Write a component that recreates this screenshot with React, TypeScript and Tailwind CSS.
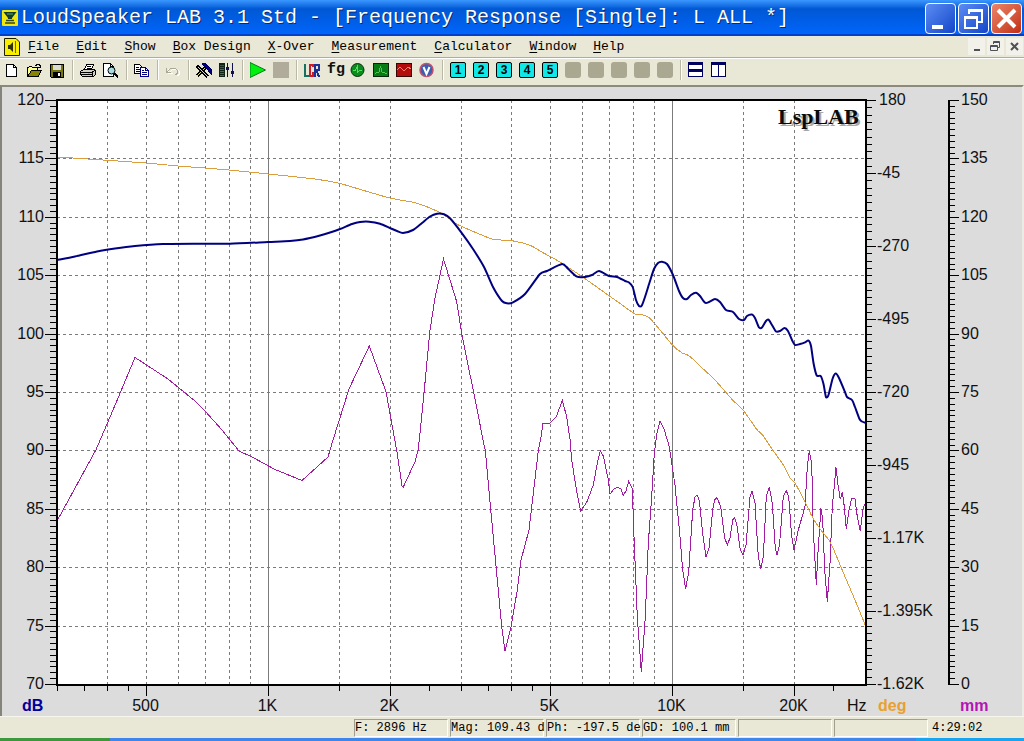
import type { ReactNode } from "react";

type Point = [number, number];

const MONO = "font-['Liberation_Mono',monospace]";

/* ---------- chart geometry ---------- */

const LEFT = 57;
const RIGHT = 866;
const TOP = 100;
const BOTTOM = 684;
const GD_AXIS = 949;

const freqX = (hz: number) => Math.round(268 + 404 * Math.log10(hz / 1000)) + 0.5;
const rowY = (index: number, count: number) =>
  Math.round(TOP + ((BOTTOM - TOP) * index) / count) + 0.5;

const dashedFreqs = [400, 500, 600, 700, 800, 900, 1500, 2000, 3000, 4000, 5000, 6000, 7000, 8000, 9000, 15000, 20000];
const solidFreqs = [1000, 10000];
const minorFreqs = [300, 350, 400, 450, 1500, 2500, 3000, 3500, 4000, 4500, 15000, 25000];
const majorFreqs: { hz: number; label: string }[] = [
  { hz: 500, label: "500" },
  { hz: 1000, label: "1K" },
  { hz: 2000, label: "2K" },
  { hz: 5000, label: "5K" },
  { hz: 10000, label: "10K" },
  { hz: 20000, label: "20K" },
];

const dbLabels = ["120", "115", "110", "105", "100", "95", "90", "85", "80", "75", "70"];
const degLabels = ["180", "-45", "-270", "-495", "-720", "-945", "-1.17K", "-1.395K", "-1.62K"];
const mmLabels = ["150", "135", "120", "105", "90", "75", "60", "45", "30", "15", "0"];

const magnitude: Point[] = [
  [57, 260], [75, 256.5], [97, 251.5], [115, 248.5], [135, 246], [163, 244], [200, 243.7], [230, 243.7],
  [268, 242], [290, 241], [303, 239.5], [320, 235.5], [330, 232.5], [340, 229], [352, 224], [360, 222],
  [369, 221.7], [380, 223.7], [390, 228], [397, 231], [403, 233], [413, 230], [422, 223], [430, 216.5],
  [437, 213.7], [444, 214.3], [450, 218.3], [462, 233.3], [473, 249], [484, 267], [493, 287], [502, 301],
  [507, 303.3], [513, 302.3], [525, 294], [540, 274], [547, 271], [562, 264], [568, 268.7], [577, 276.7],
  [585, 277], [592, 275], [599, 271], [609, 276], [617, 277], [625, 281], [629, 282.5], [632.7, 287],
  [636, 300], [639, 306], [641.7, 305.7], [645, 297], [650, 281], [654, 269], [658, 263], [662, 261.7],
  [667, 264], [673, 275], [679, 291], [683, 298], [687, 299], [691, 295], [696, 292.7], [700, 296],
  [705, 302.7], [709, 302], [715, 299], [720, 302], [726, 310], [733, 312], [739, 319], [744, 320],
  [747, 316], [752, 314.5], [755, 318], [759, 327.5], [762, 327.5], [766, 321], [768.5, 319.7], [772, 325],
  [776, 331.5], [780, 331], [784.5, 328], [788, 331], [792, 340], [795, 345], [800, 344], [805, 342.3],
  [808.5, 340.5], [811, 346], [813.5, 363], [816.7, 375.5], [820.7, 376], [823.5, 384], [826, 397], [828.5, 395],
  [832.5, 379], [835.7, 373.5], [839, 378], [845, 392], [847, 397], [852, 400], [855, 407], [859.5, 419],
  [862, 421.5], [866, 423],
];

const phase: Point[] = [
  [57, 157], [80, 158.5], [103, 160], [146, 163], [178, 166], [205, 168], [229, 170], [249, 172],
  [268, 174], [315, 179], [340, 183.5], [362, 190], [390, 198], [415, 202.7], [430, 208], [443, 214.3],
  [458, 224.7], [477, 233], [493, 239.3], [512, 240.7], [530, 245.3], [543, 252.7], [560, 262], [583, 277.3],
  [600, 289.3], [617, 301.3], [635, 314], [641.7, 314.7], [649, 317.7], [656.7, 326], [672.7, 345.3],
  [681.7, 352.7], [689.3, 356], [703.3, 369], [715, 380], [731.7, 399], [744, 411.3], [756.7, 429.3],
  [763, 435.5], [773, 450.5], [783, 464.5], [790, 477.7], [795, 483.3], [803, 497.7], [813, 518.3],
  [821.7, 531], [830, 541.7], [836.7, 556.7], [845, 576.7], [855, 600], [865, 624.5],
];

const groupDelay: Point[] = [
  [57, 521], [96, 449.7], [107, 424], [113, 410], [135, 357.5], [168, 379], [195, 401], [205, 411],
  [222, 430], [239, 451], [253, 457.5], [275, 469.5], [302, 480.5], [328, 457], [333, 440], [349, 389],
  [369.3, 346], [386, 391.7], [393, 430], [397, 452], [402, 486], [403.3, 487], [415, 461.7], [418, 450.7],
  [419.5, 438], [424.3, 390], [430, 330], [435, 298], [443.5, 259], [456.7, 301.7], [461.7, 333.3],
  [468.3, 366.7], [473.3, 390], [482.7, 438.3], [485.3, 450.7], [490.7, 509.3], [496.7, 573.3],
  [501.7, 626.7], [505, 651], [511, 626.7], [517.3, 590], [521, 560], [529, 530], [533.3, 493.3],
  [538.3, 450.7], [540.7, 439], [543, 423.5], [550, 423], [556, 417.3], [562.3, 400.5], [566.7, 416.7],
  [570, 439.3], [571.7, 460], [576.7, 491.7], [580.7, 511], [586.7, 502.3], [593.3, 485], [597.3, 463.3],
  [600.3, 450.5], [603.3, 456], [608, 478.3], [610, 494], [614, 489], [617, 487.7], [620.7, 488.3],
  [623.3, 495.3], [626, 491], [628.7, 481], [632.3, 488.3], [634, 536.7], [637.3, 616.7], [641.3, 672],
  [645.3, 616.7], [648.3, 543.3], [651.7, 496.7], [654.3, 453.3], [657, 433], [660, 421], [664.3, 430],
  [669.3, 446.7], [672.5, 468.5], [675, 485], [680, 536.7], [682.7, 570], [685.7, 589], [688.7, 571.7],
  [692.7, 510], [695, 497], [697.3, 495.3], [699.3, 500.7], [702.7, 533.3], [706, 557], [709, 548.3],
  [712.7, 510], [714.7, 500], [717, 497.7], [720.7, 506.7], [724.7, 538.3], [727.3, 544.7], [730, 538],
  [732.7, 520], [734.3, 517.7], [736.7, 523.3], [740, 548.3], [743, 555.3], [746, 545], [750, 496.7],
  [752, 491], [755, 503.3], [758.3, 556.7], [760.7, 569], [763.3, 556.7], [766.3, 496.7], [769.3, 487],
  [772.3, 503.3], [775.3, 548.3], [777, 555.3], [779.5, 545], [783.3, 496.7], [786.3, 490.7],
  [788.7, 496.7], [791.7, 536.7], [794, 550], [798.3, 530], [805, 506.7], [807.3, 466.7], [809.3, 451],
  [811.7, 463.3], [813.3, 530], [816.3, 584.5], [818.3, 546.7], [821, 508.5], [822.7, 520], [824.7, 570],
  [827.3, 601.5], [830, 563.3], [832.3, 506.7], [836, 467.5], [838, 485], [840.3, 499.3], [842.3, 492],
  [844.3, 506.7], [846.3, 529], [849, 510], [851.7, 498.3], [855, 499], [857.3, 516.7], [860.3, 531],
  [863.3, 507], [865, 504],
];

const straightPath = (points: Point[]) => "M" + points.map(([x, y]) => `${x} ${y}`).join("L");

function smoothPath(points: Point[]) {
  let d = `M${points[0][0]} ${points[0][1]}`;
  for (let i = 0; i < points.length - 1; i++) {
    const p0 = points[Math.max(i - 1, 0)];
    const p1 = points[i];
    const p2 = points[i + 1];
    const p3 = points[Math.min(i + 2, points.length - 1)];
    const c1 = [p1[0] + (p2[0] - p0[0]) / 8, p1[1] + (p2[1] - p0[1]) / 8];
    const c2 = [p2[0] - (p3[0] - p1[0]) / 8, p2[1] - (p3[1] - p1[1]) / 8];
    d += `C${c1[0]} ${c1[1]} ${c2[0]} ${c2[1]} ${p2[0]} ${p2[1]}`;
  }
  return d;
}

/** Ruler marks growing sideways from a vertical axis. */
function rulerPath(x: number, majors: number, long: number, short: number) {
  const steps = majors * 10;
  let d = "";
  for (let i = 0; i <= steps; i++) {
    d += `M${x} ${rowY(i, steps)}h${i % 10 === 0 ? long : short}`;
  }
  return d;
}

function Chart() {
  return (
    <svg
      viewBox="2 87 1020 629"
      role="img"
      aria-label="Frequency response chart"
      className="block h-auto w-full font-['Liberation_Sans',Arial,sans-serif] text-[16px]"
    >
      <rect x={LEFT} y={TOP} width={RIGHT - LEFT} height={BOTTOM - TOP} fill="#fff" />

      <g stroke="#7b7b7b" strokeWidth="1" fill="none" shapeRendering="crispEdges">
        {dashedFreqs.map((hz) => (
          <path key={hz} d={`M${freqX(hz)} ${TOP}V${BOTTOM}`} strokeDasharray="3 3" />
        ))}
        {solidFreqs.map((hz) => (
          <path key={hz} d={`M${freqX(hz)} ${TOP}V${BOTTOM}`} />
        ))}
        {dbLabels.slice(1, -1).map((label, i) => (
          <path key={label} d={`M${LEFT} ${rowY(i + 1, 10)}H${RIGHT}`} strokeDasharray="3 3" />
        ))}
      </g>

      <g fill="none" shapeRendering="crispEdges">
        <path d={straightPath(groupDelay)} stroke="#a01ca0" strokeWidth="1" />
        <path d={smoothPath(phase)} stroke="#dc9e3c" strokeWidth="1" />
      </g>
      <path d={smoothPath(magnitude)} stroke="#000080" strokeWidth="2" fill="none" />

      <g stroke="#000" fill="none" shapeRendering="crispEdges">
        <rect x={LEFT} y={TOP} width={RIGHT - LEFT} height={BOTTOM - TOP + 1} strokeWidth="2" transform="translate(-.5 0)" />
        <path d={`M${GD_AXIS} ${TOP}V${BOTTOM + 1}`} strokeWidth="2" />
        <path d={rulerPath(LEFT, 10, -12, -7)} />
        <path d={rulerPath(RIGHT, 8, 10, 6)} />
        <path d={rulerPath(GD_AXIS, 10, 10, 6)} />
        {minorFreqs.map((hz) => (
          <path key={hz} d={`M${freqX(hz)} ${BOTTOM}v7`} />
        ))}
        {majorFreqs.map(({ hz }) => (
          <path key={hz} d={`M${freqX(hz)} ${BOTTOM}v12`} />
        ))}
      </g>

      <g fill="#111">
        {dbLabels.map((label, i) => (
          <text key={label} x="44" y={rowY(i, 10) + 4.5} textAnchor="end">{label}</text>
        ))}
        {degLabels.map((label, i) => (
          <text key={label} x={label.startsWith("-") ? 877 : 879} y={rowY(i, 8) + 4.5}>{label}</text>
        ))}
        {mmLabels.map((label, i) => (
          <text key={label} x="961" y={rowY(i, 10) + 4.5}>{label}</text>
        ))}
        {majorFreqs.map(({ hz, label }) => (
          <text key={hz} x={freqX(hz) - 1} y="711" textAnchor="middle">{label}</text>
        ))}
        <text x="847" y="711">Hz</text>
      </g>
      <g fontWeight="bold">
        <text x="22" y="711" fill="#00009a">dB</text>
        <text x="878" y="711" fill="#e8a030">deg</text>
        <text x="960" y="711" fill="#b414b4">mm</text>
      </g>
      <g fontSize="22" fontWeight="bold" className="font-['Liberation_Serif',serif]">
        <text x="780" y="126" fill="#a8a8a8">LspLAB</text>
        <text x="778" y="124" fill="#0a0a0a">LspLAB</text>
      </g>
    </svg>
  );
}

/* ---------- toolbar icons ---------- */

function Icon({ children }: { children: ReactNode }) {
  return (
    <svg width="16" height="16" viewBox="0 0 16 16" fill="none" aria-hidden="true" shapeRendering="crispEdges">
      {children}
    </svg>
  );
}

const NumberIcon = ({ n }: { n: number }) => (
  <span className="flex size-4 items-center justify-center rounded-[2px] border border-black bg-[#10e8e8] font-['Liberation_Sans',Arial,sans-serif] text-[12px] leading-none font-bold text-black">
    {n}
  </span>
);

const EmptyIcon = () => <span className="block size-4 rounded-[3px] bg-[#aaa890]" />;

type Tool = { name: string; icon: ReactNode };

const toolGroups: Tool[][] = [
  [
    {
      name: "New",
      icon: (
        <Icon>
          <path d="M3.5 2.5H10.5L13.5 5.5V14.5H3.5Z" fill="#fff" stroke="#000" />
          <path d="M10.5 2.5V5.5H13.5" stroke="#000" />
        </Icon>
      ),
    },
    {
      name: "Open",
      icon: (
        <Icon>
          <path d="M1.5 14V5.5H2.5L3.5 4.5H5.5L6.5 5.5H11.5V8" fill="#ffff90" stroke="#000" />
          <path d="M1.5 14.5L5.5 8.5H15.5L12 14.5Z" fill="#858500" stroke="#000" />
          <path d="M9 3.5H10V2.5H13V3.5H14V5M12 5.5H15M14.5 3V6" stroke="#000" />
        </Icon>
      ),
    },
    {
      name: "Save",
      icon: (
        <Icon>
          <path d="M1.5 2.5H14.5V15.5H2.5L1.5 14.5Z" fill="#77770e" stroke="#000" />
          <path d="M4 3H12V8H4Z" fill="#dcdcd4" />
          <path d="M4 10H12V15H4Z" fill="#000" />
          <path d="M9 11H11V14H9Z" fill="#fff" />
        </Icon>
      ),
    },
  ],
  [
    {
      name: "Print",
      icon: (
        <Icon>
          <path d="M4.5 7.5L6.5 2.5H13.5L11.5 7.5Z" fill="#fff" stroke="#000" />
          <path d="M7 4.5H11M6.5 6H10.5" stroke="#000" />
          <path d="M.5 9.5L3.5 7.5H14.5L15.5 8.5V12.5L13.5 14.5H2.5L.5 12.5Z" fill="#d0d0c8" stroke="#000" />
          <path d="M1 10.5H12.5M1 12.5H12.5M12.5 10V14M12.5 10L15 8" stroke="#000" />
          <path d="M8 11.5H10" stroke="#d8c800" />
        </Icon>
      ),
    },
    {
      name: "Print preview",
      icon: (
        <Icon>
          <path d="M.5 1.5H7.5L10.5 4.5V14.5H.5Z" fill="#fff" stroke="#000" />
          <path d="M7.5 1.5V4.5H10.5" stroke="#000" />
          <circle cx="8.5" cy="8.5" r="3.5" fill="#a8dce0" stroke="#000" shapeRendering="auto" />
          <path d="M11 11.5L15 15" stroke="#000" strokeWidth="2" />
        </Icon>
      ),
    },
  ],
  [
    {
      name: "Copy",
      icon: (
        <Icon>
          <path d="M.5 2.5H5.5L8.5 5.5V11.5H.5Z" fill="#fff" stroke="#000" />
          <path d="M2 5.5H5M2 7.5H6M2 9.5H6" stroke="#000" />
          <path d="M6.5 5.5H11.5L14.5 8.5V14.5H6.5Z" fill="#fff" stroke="#000080" />
          <path d="M11.5 5.5V8.5H14.5M8 8.5H10M8 10.5H13M8 12.5H13" stroke="#000080" />
        </Icon>
      ),
    },
  ],
  [
    {
      name: "Undo",
      icon: (
        <Icon>
          <path d="M2.5 6V10.5H7M3 10L6.5 6.5H10.5L13.5 8.5V11L11.5 13" stroke="#fff" transform="translate(1 1)" />
          <path d="M1.5 6V10.5H6M2 10L5.5 6.5H10.5L12.5 8.5V11L10.5 13" stroke="#aaa896" />
        </Icon>
      ),
    },
  ],
  [
    {
      name: "Tools",
      icon: (
        <Icon>
          <path d="M1 14L9 6" stroke="#000" strokeWidth="3" />
          <path d="M1 14L9 6" stroke="#e8e060" />
          <path d="M6 2L9 1L15 7V12L11 7Z" fill="#000080" stroke="#000060" />
          <path d="M1 4L12 15" stroke="#000" strokeWidth="3" />
          <path d="M2 5L12 15" stroke="#d8d8d0" />
        </Icon>
      ),
    },
    {
      name: "Levels",
      icon: (
        <Icon>
          <path d="M0 1H6V15H0Z" fill="#102418" />
          <path d="M1 3.5H5M1 5.5H5" stroke="#b02424" />
          <path d="M1 7.5H5M1 9.5H5M1 11.5H5M1 13.5H5" stroke="#1c8840" />
          <path d="M8.5 1V15M13.5 1V15" stroke="#101050" />
          <path d="M7 5H10V8H7ZM12 9H15V12H12Z" fill="#101050" />
        </Icon>
      ),
    },
  ],
  [
    {
      name: "Run",
      icon: (
        <Icon>
          <path d="M0 .5L15.5 8L0 15.5Z" fill="#00f010" stroke="#087818" shapeRendering="auto" />
        </Icon>
      ),
    },
    { name: "Stop", icon: <span className="block size-4 bg-[#b0ab9b]" /> },
  ],
  [
    {
      name: "LCR",
      icon: (
        <Icon>
          <path d="M1 2V14H4.500" stroke="#187060" strokeWidth="2" />
          <path d="M9 5V2.500H6V13.500H9V10" stroke="#c81c28" strokeWidth="2" />
          <path d="M11 15V2.500H14.500V7.500H12" stroke="#1c3094" strokeWidth="2" />
          <path d="M12.500 8L15 15" stroke="#1c3094" strokeWidth="2" />
        </Icon>
      ),
    },
    {
      name: "Function generator",
      icon: <span className={`${MONO} text-[15px] leading-4 font-bold text-[#101010]`}>fg</span>,
    },
    {
      name: "Sine sweep",
      icon: (
        <Icon>
          <circle cx="7.5" cy="8" r="6.5" fill="#0c8c1c" stroke="#06300c" shapeRendering="auto" />
          <path d="M3 8.5H5L7 5V11L9.5 8.5H12" stroke="#50e060" />
        </Icon>
      ),
    },
    {
      name: "Spectrum",
      icon: (
        <Icon>
          <path d="M.5 1.5H15.5V14.5H.5Z" fill="#067c14" stroke="#04280a" />
          <path d="M2 11.5L6 10L7.5 4L9 10L14 11.5" stroke="#50c850" />
        </Icon>
      ),
    },
    {
      name: "Oscilloscope",
      icon: (
        <Icon>
          <path d="M.5 1.5H15.5V14.5H.5Z" fill="#b40c0c" stroke="#380404" />
          <path d="M1 8L4 5L7 8H9L12 5L15 7" stroke="#f08070" />
        </Icon>
      ),
    },
    {
      name: "Voltmeter",
      icon: (
        <svg width="16" height="16" viewBox="0 0 16 16" fill="none" aria-hidden="true">
          <circle cx="7.5" cy="8" r="6.5" fill="#3860b0" stroke="#c05070" strokeWidth="1.5" />
          <path d="M4.5 5L7.5 12L10.5 5" stroke="#fff" strokeWidth="2" />
        </svg>
      ),
    },
  ],
  [
    ...[1, 2, 3, 4, 5].map((n) => ({ name: `Curve ${n}`, icon: <NumberIcon n={n} /> })),
    ...[6, 7, 8, 9, 10].map((n) => ({ name: `Curve ${n}`, icon: <EmptyIcon /> })),
  ],
  [
    {
      name: "Tile horizontally",
      icon: (
        <Icon>
          <path d="M.5 .5H14.5V7.5H.5ZM.5 8.5H14.5V14.5H.5Z" fill="#fff" stroke="#000060" />
          <path d="M0 0H15V3H0ZM0 7H15V10H0Z" fill="#000060" />
        </Icon>
      ),
    },
    {
      name: "Tile vertically",
      icon: (
        <Icon>
          <path d="M.5 .5H7.5V14.5H.5ZM7.5 .5H14.5V14.5H7.5Z" fill="#fff" stroke="#000060" />
          <path d="M0 0H15V3H0Z" fill="#000060" />
        </Icon>
      ),
    },
  ],
];

function Toolbar() {
  return (
    <div role="toolbar" className="flex h-[27px] items-start border-t border-white pt-px">
      {toolGroups.map((group, index) => (
        <div key={group[0].name} className="flex items-center">
          {index > 0 && (
            <span className="flex w-2 justify-center">
              <span className="h-5 w-0.5 border-r border-l border-r-white border-l-[#bab8a6]" />
            </span>
          )}
          {group.map((tool) => (
            <button key={tool.name} type="button" aria-label={tool.name} className="flex h-5 w-[23px] items-center pl-[3px]">
              {tool.icon}
            </button>
          ))}
        </div>
      ))}
    </div>
  );
}

/* ---------- window chrome ---------- */

const menus = ["File", "Edit", "Show", "Box Design", "X-Over", "Measurement", "Calculator", "Window", "Help"];

function TitleBar() {
  return (
    <header className="flex h-9 items-center gap-0.5 bg-linear-to-b from-[#3a98ff] via-[#0058d4] via-25% to-[#0066ff] px-0.5 shadow-[inset_0_-2px_0_#0040c8]">
      <svg width="16" height="16" viewBox="0 0 16 16" aria-hidden="true" className="shrink-0">
        <rect width="16" height="16" rx="1" fill="#f0e80c" />
        <path d="M1.500 2H14.500L10 8V9H6V8Z" fill="#143c30" />
        <path d="M5 4H11" stroke="#58b058" />
        <path d="M4 10.500H12M3 13H13" stroke="#30481c" strokeWidth="1.500" />
      </svg>
      <h1 className={`${MONO} min-w-0 flex-1 truncate pl-px text-[20px] leading-9 text-white [text-shadow:1px_1px_0_#0a2a70]`}>
        LoudSpeaker LAB 3.1 Std - [Frequency Response [Single]: L ALL *]
      </h1>
      <button type="button" aria-label="Minimize" className="size-[31px] rounded-[4px] border border-white bg-linear-to-br from-[#5c8cf4] to-[#1444c8]">
        <svg width="29" height="29" viewBox="0 0 29 29" aria-hidden="true">
          <path d="M6 21H17V25H6Z" fill="#fff" />
        </svg>
      </button>
      <button type="button" aria-label="Restore" className="size-[31px] rounded-[4px] border border-white bg-linear-to-br from-[#5c8cf4] to-[#1444c8]">
        <svg width="29" height="29" viewBox="0 0 29 29" fill="none" stroke="#fff" aria-hidden="true">
          <path d="M10 10V6H23V18H19" strokeWidth="2" />
          <path d="M9 6.500H24" strokeWidth="3" />
          <path d="M6 14H18V24H6Z" strokeWidth="2" />
          <path d="M5 13.500H19" strokeWidth="3" />
        </svg>
      </button>
      <button type="button" aria-label="Close" className="size-[31px] rounded-[4px] border border-white bg-linear-to-br from-[#ec8468] to-[#c02c10]">
        <svg width="29" height="29" viewBox="0 0 29 29" stroke="#fff" strokeWidth="4" aria-hidden="true">
          <path d="M6 6L23 23M23 6L6 23" />
        </svg>
      </button>
    </header>
  );
}

function MenuBar() {
  return (
    <nav className="flex h-[22px] items-center border-b border-[#aeac9c] pr-px pl-1">
      <svg width="16" height="18" viewBox="0 0 16 18" aria-hidden="true" className="shrink-0">
        <path d="M.5 .5H12L15.500 4V17.500H.5Z" fill="#f8f000" stroke="#202000" />
        <path d="M4 7H6L9 4V14L6 11H4Z" fill="#303010" />
        <path d="M11.500 3V15" stroke="#806000" />
      </svg>
      <ul className={`${MONO} flex flex-1 gap-px pt-px text-[13px] leading-5 text-black`}>
        {menus.map((menu) => (
          <li key={menu}>
            <button type="button" className="px-2 whitespace-pre">
              <span className="underline underline-offset-2">{menu[0]}</span>
              {menu.slice(1)}
            </button>
          </li>
        ))}
      </ul>
      <div className="flex gap-0.5">
        <button type="button" aria-label="Minimize chart" className="size-[17px] bg-[#f3f2ea]">
          <svg width="17" height="17" viewBox="0 0 17 17" aria-hidden="true">
            <path d="M6 11H12V13H6Z" fill="#505058" />
          </svg>
        </button>
        <button type="button" aria-label="Restore chart" className="size-[17px] bg-[#f3f2ea]">
          <svg width="17" height="17" viewBox="0 0 17 17" fill="none" stroke="#505058" aria-hidden="true">
            <path d="M6.500 6V3.500H12.500V9.500H11M6 4.500H13M3.500 7.500H10.500V12.500H3.500ZM3 8.500H11" />
          </svg>
        </button>
        <button type="button" aria-label="Close chart" className="size-[17px] bg-[#f3f2ea]">
          <svg width="17" height="17" viewBox="0 0 17 17" stroke="#505058" strokeWidth="2" aria-hidden="true">
            <path d="M5 5L12 12M12 5L5 12" />
          </svg>
        </button>
      </div>
    </nav>
  );
}

const readings = ["F: 2896 Hz", "Mag: 109.43 d", "Ph: -197.5 de", "GD: 100.1 mm", "", ""];

function StatusBar() {
  return (
    <footer className={`${MONO} flex h-[22px] items-end justify-end gap-0.5 border-t border-[#f6f5ee] pb-px text-[12px] leading-4 text-black`}>
      {readings.map((text, index) => (
        <span
          key={index}
          className="h-[18px] w-[94px] border border-t-[#a09e8c] border-r-white border-b-white border-l-[#a09e8c] whitespace-pre"
        >
          {text}
        </span>
      ))}
      <time className="h-[18px] w-[94px] pt-px pl-0.5">4:29:02</time>
    </footer>
  );
}

export default function App() {
  return (
    <div className="min-h-screen bg-[#e9e7d6]">
      <TitleBar />
      <MenuBar />
      <Toolbar />
      <main className="border-t-2 border-r-2 border-l-2 border-t-[#8c8a7c] border-r-[#ecebe4] border-l-[#84847a] bg-[#dcdcdc]">
        <Chart />
      </main>
      <StatusBar />
      <div className="flex h-[3px]">
        <div className="w-[110px] bg-[#3c9a3c]" />
        <div className="flex-1 bg-[#3f86ec]" />
        <div className="w-[108px] bg-[#18a4f0]" />
      </div>
    </div>
  );
}
